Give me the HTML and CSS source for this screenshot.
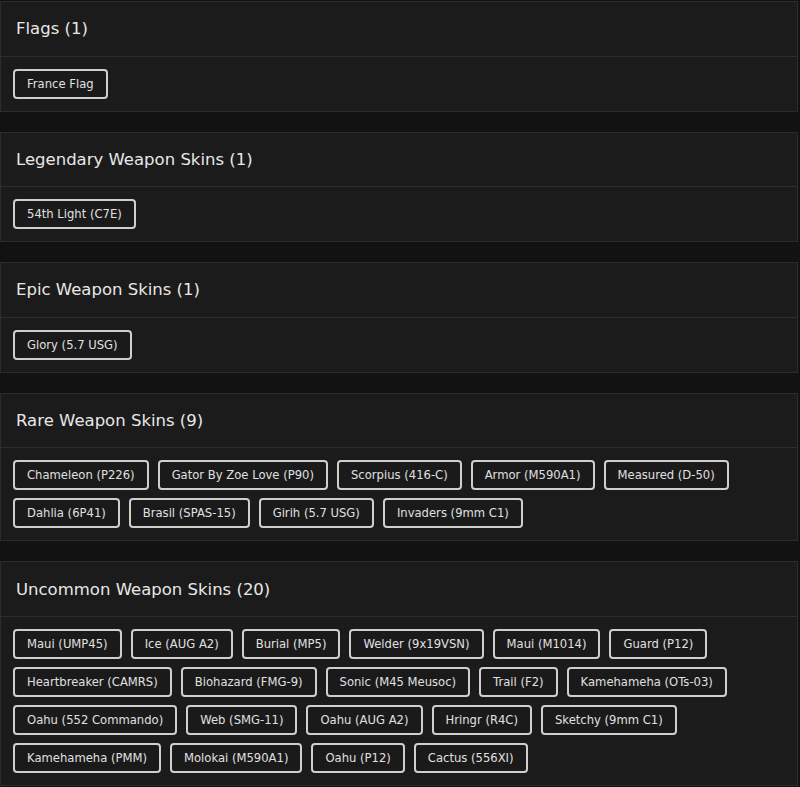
FILE: index.html
```html
<!DOCTYPE html>
<html>
<head>
<meta charset="utf-8">
<link rel="stylesheet" href="styles.css">
</head>
<body>
<div class="page">
  <section class="card">
    <h2 class="card-title">Flags (1)</h2>
    <div class="card-body">
      <span class="pill">France Flag</span>
    </div>
  </section>
  <section class="card">
    <h2 class="card-title">Legendary Weapon Skins (1)</h2>
    <div class="card-body">
      <span class="pill">54th Light (C7E)</span>
    </div>
  </section>
  <section class="card">
    <h2 class="card-title">Epic Weapon Skins (1)</h2>
    <div class="card-body">
      <span class="pill">Glory (5.7 USG)</span>
    </div>
  </section>
  <section class="card">
    <h2 class="card-title">Rare Weapon Skins (9)</h2>
    <div class="card-body">
      <span class="pill">Chameleon (P226)</span>
      <span class="pill">Gator By Zoe Love (P90)</span>
      <span class="pill">Scorpius (416-C)</span>
      <span class="pill">Armor (M590A1)</span>
      <span class="pill">Measured (D-50)</span>
      <span class="pill">Dahlia (6P41)</span>
      <span class="pill">Brasil (SPAS-15)</span>
      <span class="pill">Girih (5.7 USG)</span>
      <span class="pill">Invaders (9mm C1)</span>
    </div>
  </section>
  <section class="card">
    <h2 class="card-title">Uncommon Weapon Skins (20)</h2>
    <div class="card-body">
      <span class="pill">Maui (UMP45)</span>
      <span class="pill">Ice (AUG A2)</span>
      <span class="pill">Burial (MP5)</span>
      <span class="pill">Welder (9x19VSN)</span>
      <span class="pill">Maui (M1014)</span>
      <span class="pill">Guard (P12)</span>
      <span class="pill">Heartbreaker (CAMRS)</span>
      <span class="pill">Biohazard (FMG-9)</span>
      <span class="pill">Sonic (M45 Meusoc)</span>
      <span class="pill">Trail (F2)</span>
      <span class="pill">Kamehameha (OTs-03)</span>
      <span class="pill">Oahu (552 Commando)</span>
      <span class="pill">Web (SMG-11)</span>
      <span class="pill">Oahu (AUG A2)</span>
      <span class="pill">Hringr (R4C)</span>
      <span class="pill">Sketchy (9mm C1)</span>
      <span class="pill">Kamehameha (PMM)</span>
      <span class="pill">Molokai (M590A1)</span>
      <span class="pill">Oahu (P12)</span>
      <span class="pill">Cactus (556XI)</span>
    </div>
  </section>
</div>
</body>
</html>
```

FILE: styles.css
```css
html, body {
  margin: 0;
  padding: 0;
  background: #121212;
}
body {
  font-family: "DejaVu Sans", "Noto Sans", sans-serif;
  color: #e6e6e6;
}
.page {
  padding-top: 1px;
  width: 798px;
  display: flex;
  flex-direction: column;
  gap: 20px;
}
.card {
  background: #1b1b1b;
  border: 1px solid #2c2c2c;
}
.card-title {
  margin: 0;
  height: 53.6px;
  display: flex;
  align-items: center;
  padding: 0 15px;
  font-size: 16.5px;
  font-weight: normal;
  color: #e8e8e8;
  border-bottom: 1px solid #2e2e2e;
}
.card-body {
  padding: 12px 12px;
  display: flex;
  flex-wrap: wrap;
  gap: 8px 9px;
}
.pill {
  display: inline-flex;
  align-items: center;
  height: 30px;
  box-sizing: border-box;
  padding: 0 12px;
  border: 2px solid #cfcfcf;
  border-radius: 4px;
  background: #1a1a1a;
  font-size: 11.6px;
  color: #e0e0e0;
}
```
